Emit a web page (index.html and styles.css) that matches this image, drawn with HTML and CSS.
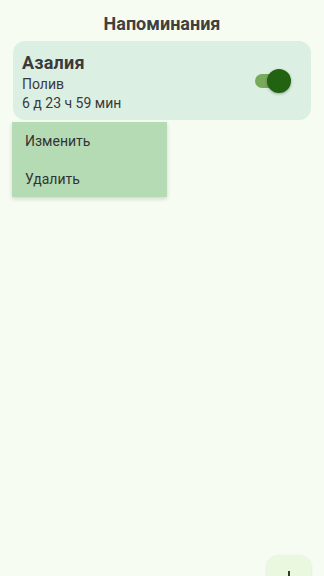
FILE: index.html
```html
<!DOCTYPE html>
<html lang="ru">
<head>
<meta charset="utf-8">
<link rel="stylesheet" href="styles.css">
</head>
<body>
<div class="screen">
  <header class="topbar">Напоминания</header>
  <main class="list">
    <div class="card">
      <div class="card-text">
        <div class="plant">Азалия</div>
        <div class="task">Полив</div>
        <div class="time">6 д 23 ч 59 мин</div>
      </div>
      <div class="switch"><span class="track"></span><span class="thumb"></span></div>
    </div>
    <div class="menu">
      <div class="menu-item">Изменить</div>
      <div class="menu-item">Удалить</div>
    </div>
  </main>
  <button class="fab" aria-label="Добавить">
    <svg class="plus" width="20" height="20" viewBox="0 0 20 20"><path d="M10 1v18M1 10h18" stroke="#2f3a28" stroke-width="2" fill="none"/></svg>
  </button>
</div>
</body>
</html>
```
FILE: styles.css
```css
* { box-sizing: border-box; }
html, body { margin: 0; padding: 0; }
body {
  background: #f7fcf3;
  font-family: Roboto, "Noto Sans", sans-serif;
  color: #3a3a3a;
}
.screen {
  position: relative;
  width: 324px;
  height: 576px;
  overflow: hidden;
}
.topbar {
  height: 41px;
  display: flex;
  align-items: center;
  justify-content: center;
  font-size: 18px;
  font-weight: 700;
  color: #404040;
  padding-top: 5px;
}
.list {
  padding: 0 13px;
}
.card {
  height: 79px;
  background: #dcefe3;
  border-radius: 12px;
  display: flex;
  align-items: center;
  justify-content: space-between;
  padding: 0 20px 0 9px;
}
.card-text { display: flex; flex-direction: column; padding-top: 4px; }
.plant { font-size: 18px; font-weight: 700; color: #3a3a3a; line-height: 22px; letter-spacing: 0.2px; }
.task, .time { font-size: 14px; color: #3a3a3a; line-height: 19px; }
.task { margin-top: 1px; }
.switch {
  position: relative;
  width: 36px;
  height: 24px;
  margin-top: 1px;
}
.track {
  position: absolute;
  left: 0; top: 5px;
  width: 32px; height: 14px;
  border-radius: 7px;
  background: #79a95a;
}
.thumb {
  position: absolute;
  right: 0; top: 0;
  width: 24px; height: 24px;
  border-radius: 50%;
  background: #216311;
  box-shadow: 0 1px 3px rgba(0,0,0,0.3);
}
.menu {
  margin-top: 2px;
  margin-left: -1px;
  width: 155px;
  background: #b5dbb4;
  box-shadow: 0 2px 4px rgba(0,0,0,0.15);
}
.menu-item {
  height: 38px;
  display: flex;
  align-items: center;
  padding-left: 13px;
  font-size: 14px;
  color: #333;
}
.menu-item:last-child { height: 37px; }
.fab {
  position: absolute;
  left: 267px;
  top: 555px;
  width: 44px;
  height: 56px;
  border: none;
  border-radius: 12px;
  background: #e9f8de;
  box-shadow: 0 1px 3px rgba(0,0,0,0.12);
  padding: 0;
  display: flex;
  align-items: center;
  justify-content: center;
}
.plus { display: block; margin-top: -6px; }
```
